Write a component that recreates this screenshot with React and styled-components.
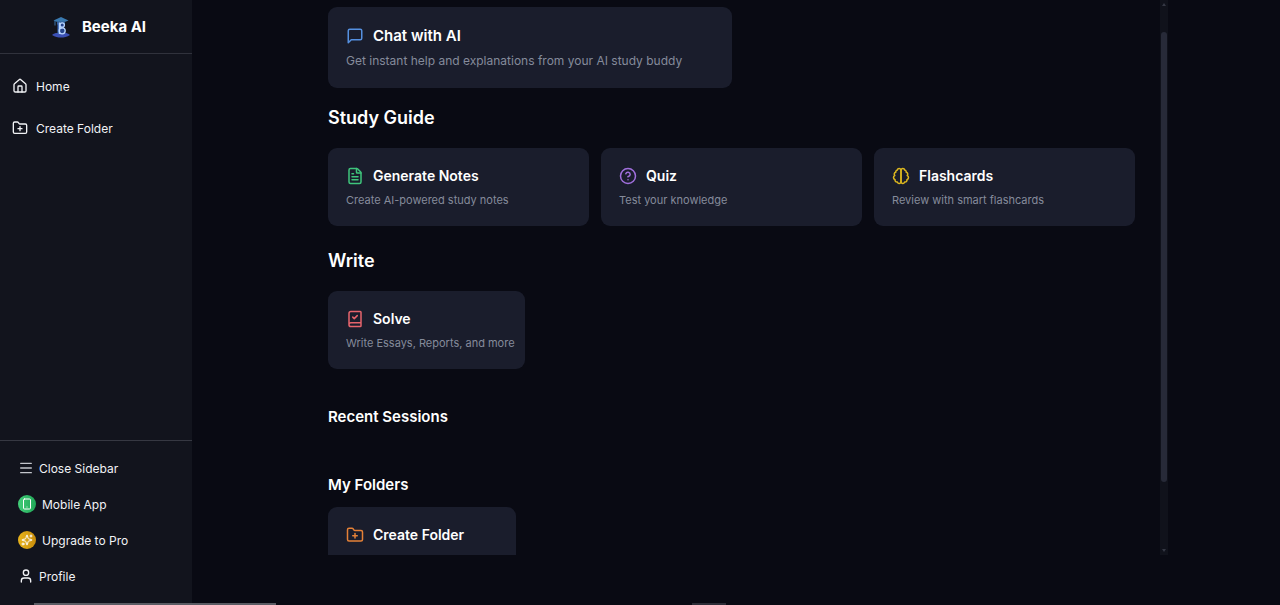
import React from "react";
import styled, { createGlobalStyle, css } from "styled-components";
import {
  House,
  FolderPlus,
  Menu,
  Smartphone,
  Sparkles,
  User,
  FileText,
  CircleHelp,
  BookCheck,
} from "lucide-react";

const GlobalStyle = createGlobalStyle`
  * { box-sizing: border-box; }
  body {
    margin: 0;
    background: #090a13;
    color: #fff;
    font-family: Inter, "Liberation Sans", sans-serif;
  }
  h1, h2, h3, p { margin: 0; }
`;

const Shell = styled.div`
  display: flex;
  height: 100vh;
  overflow: hidden;
`;

const Sidebar = styled.aside`
  display: flex;
  flex-direction: column;
  flex: 0 0 192px;
  background: #12141d;
`;

const Brand = styled.header`
  display: flex;
  align-items: center;
  justify-content: center;
  gap: 12px;
  height: 54px;
  padding-left: 6px;
  border-bottom: 1px solid #30323c;
`;

const BrandName = styled.h1`
  font-size: 15px;
  line-height: 24px;
  font-weight: 700;
`;

const Nav = styled.nav`
  display: flex;
  flex-direction: column;
  flex: 1;
  gap: 10px;
  padding: 16px 12px;
`;

const itemText = css`
  display: flex;
  align-items: center;
  color: #f1f2f5;
  font-family: inherit;
  font-size: 12px;
  text-align: left;
  text-decoration: none;
`;

const NavLink = styled.a`
  ${itemText}
  gap: 8px;
  height: 32px;
`;

const Footer = styled.footer`
  display: flex;
  flex-direction: column;
  padding: 9px 18px 11px;
  border-top: 1px solid #363842;
`;

const FooterButton = styled.button`
  ${itemText}
  gap: 6px;
  height: 36px;
  padding: 0;
  border: 0;
  background: none;
`;

const PlainIcon = styled.span`
  display: flex;
  justify-content: center;
  width: 15px;

  svg { flex: none; }
`;

const RoundIcon = styled.span`
  display: flex;
  align-items: center;
  justify-content: center;
  width: 18px;
  height: 18px;
  border-radius: 50%;
  color: #fff;
  background: ${(p) => p.$fill};
`;

const Main = styled.main`
  display: flex;
  flex: 1;
  justify-content: center;
  min-width: 0;
  padding-bottom: 50px;
`;

const Viewport = styled.div`
  display: flex;
  flex: 1;
  max-width: 864px;
  overflow: hidden;
`;

const Content = styled.div`
  flex: 1;
  min-width: 0;
  padding: 7px 25px 0 24px;
`;

const ScrollTrack = styled.div`
  display: flex;
  flex-direction: column;
  justify-content: space-between;
  align-items: center;
  flex: 0 0 8px;
  padding: 3px 0;
  background: #10121b;
`;

const ScrollThumb = styled.div`
  flex: 0 0 82%;
  width: 6px;
  margin: 26px 0 auto;
  border-radius: 3px;
  background: #272a38;
`;

const Arrow = styled.span`
  border: 2px solid transparent;
  border-width: ${(p) => (p.$up ? "0 2px 3px" : "3px 2px 0")};
  border-${(p) => (p.$up ? "bottom" : "top")}-color: #353844;
`;

const SectionTitle = styled.h2`
  font-size: 18px;
  line-height: 28px;
  font-weight: 600;
  margin: ${(p) => p.$top}px 0 16px;
`;

const SubTitle = styled.h2`
  font-size: 15px;
  line-height: 24px;
  font-weight: 600;
  margin: ${(p) => p.$top}px 0 10px;
`;

const Grid = styled.div`
  display: grid;
  grid-template-columns: repeat(${(p) => p.$columns}, minmax(0, 1fr));
  gap: ${(p) => p.$gap}px;
`;

const Card = styled.button`
  display: flex;
  flex-direction: column;
  gap: ${(p) => (p.$large ? 4 : 6)}px;
  width: ${(p) => p.$width || "auto"};
  min-height: 78px;
  padding: 18px;
  border: 0;
  border-radius: 9px;
  background: #1a1d2c;
  color: #fff;
  font-family: inherit;
  text-align: left;
`;

const CardTitle = styled.span`
  display: flex;
  align-items: center;
  gap: 9px;
  font-size: ${(p) => (p.$large ? 15 : 14)}px;
  line-height: ${(p) => (p.$large ? 22 : 20)}px;
  font-weight: 600;

  svg { color: ${(p) => p.$tint}; }
`;

const CardText = styled.span`
  font-size: ${(p) => (p.$large ? 12 : 11)}px;
  line-height: ${(p) => (p.$large ? 19 : 16)}px;
  color: #858b9b;
  white-space: nowrap;
`;

const BottomLine = styled.div`
  position: fixed;
  bottom: 0;
  left: ${(p) => p.$left}px;
  width: ${(p) => p.$width}px;
  height: 2px;
  background: ${(p) => p.$color};
`;

function Stroke({ size = 18, children }) {
  return (
    <svg
      width={size}
      height={size}
      viewBox="0 0 24 24"
      fill="none"
      stroke="currentColor"
      strokeWidth="2"
      strokeLinecap="round"
      strokeLinejoin="round"
      aria-hidden="true"
    >
      {children}
    </svg>
  );
}

const ChatIcon = () => (
  <Stroke>
    <path d="M21 15a2 2 0 0 1-2 2H7l-4 4V5a2 2 0 0 1 2-2h14a2 2 0 0 1 2 2z" />
  </Stroke>
);

const BrainIcon = () => (
  <Stroke>
    <path d="M9.5 2A2.5 2.5 0 0 1 12 4.5v15a2.5 2.5 0 0 1-4.96.44 2.5 2.5 0 0 1-2.96-3.08 3 3 0 0 1-.34-5.58 2.5 2.5 0 0 1 1.32-4.24 2.5 2.5 0 0 1 1.98-3A2.5 2.5 0 0 1 9.5 2Z" />
    <path d="M14.5 2A2.5 2.5 0 0 0 12 4.5v15a2.5 2.5 0 0 0 4.96.44 2.5 2.5 0 0 0 2.96-3.08 3 3 0 0 0 .34-5.58 2.5 2.5 0 0 0-1.32-4.24 2.5 2.5 0 0 0-1.98-3A2.5 2.5 0 0 0 14.5 2Z" />
  </Stroke>
);

/* Robot figure with a graduation cap standing on an open book. */
const Logo = () => (
  <svg width="18" height="22" viewBox="0 0 18 22" fill="none" aria-hidden="true">
    <path d="M1.500 4.500 9 1l7.500 3.500L9 7.500z" fill="#3a7ab0" />
    <path d="M5 5.500h8v3H5z" fill="#315f98" />
    <path d="M3 5v4.500" stroke="#3a72a8" />
    <path d="M0 19c3-2.500 6-2.500 9-1 3-1.500 6-1.500 9 1-3 2-6 2.500-9 2.500S3 21 0 19z" fill="#3b50b4" />
    <path d="M5.500 7H12v11H5.500z" fill="#3866b8" />
    <circle cx="10.200" cy="9" r="2.200" fill="#25448b" stroke="#b9d6ff" strokeWidth="1.300" />
    <circle cx="10.200" cy="14.800" r="3" fill="#25448b" stroke="#b9d6ff" strokeWidth="1.300" />
    <path d="M7.500 6.500v11.500M7.500 11.800h3" stroke="#b9d6ff" strokeWidth="1.300" />
  </svg>
);

const guides = [
  { title: "Generate Notes", text: "Create AI-powered study notes", tint: "#3fc57c", icon: <FileText size={18} /> },
  { title: "Quiz", text: "Test your knowledge", tint: "#a06fdc", icon: <CircleHelp size={18} /> },
  { title: "Flashcards", text: "Review with smart flashcards", tint: "#dcb71f", icon: <BrainIcon /> },
];

function ActionCard({ title, text, tint, icon, large, width }) {
  return (
    <Card type="button" $large={large} $width={width}>
      <CardTitle $large={large} $tint={tint}>
        {icon}
        {title}
      </CardTitle>
      {text && <CardText $large={large}>{text}</CardText>}
    </Card>
  );
}

export default function App() {
  return (
    <>
      <GlobalStyle />
      <Shell>
        <Sidebar>
          <Brand>
            <Logo />
            <BrandName>Beeka AI</BrandName>
          </Brand>
          <Nav>
            <NavLink href="#home">
              <House size={16} />
              Home
            </NavLink>
            <NavLink href="#create-folder">
              <FolderPlus size={16} />
              Create Folder
            </NavLink>
          </Nav>
          <Footer>
            <FooterButton type="button">
              <PlainIcon><Menu size={16} color="#c3c5cc" /></PlainIcon>
              Close Sidebar
            </FooterButton>
            <FooterButton type="button">
              <RoundIcon $fill="linear-gradient(90deg, #43cf79, #20a657)">
                <Smartphone size={12} />
              </RoundIcon>
              Mobile App
            </FooterButton>
            <FooterButton type="button">
              <RoundIcon $fill="linear-gradient(90deg, #e8b31b, #c88d0c)">
                <Sparkles size={12} />
              </RoundIcon>
              Upgrade to Pro
            </FooterButton>
            <FooterButton type="button">
              <PlainIcon><User size={16} /></PlainIcon>
              Profile
            </FooterButton>
          </Footer>
        </Sidebar>
        <Main>
          <Viewport>
            <Content>
              <ActionCard
                large
                width="50%"
                title="Chat with AI"
                text="Get instant help and explanations from your AI study buddy"
                tint="#5590e0"
                icon={<ChatIcon />}
              />
              <SectionTitle $top={16}>Study Guide</SectionTitle>
              <Grid $columns={3} $gap={12}>
                {guides.map((g) => (
                  <ActionCard key={g.title} {...g} />
                ))}
              </Grid>
              <SectionTitle $top={21}>Write</SectionTitle>
              <ActionCard
                width="197px"
                title="Solve"
                text="Write Essays, Reports, and more"
                tint="#e6646c"
                icon={<BookCheck size={18} />}
              />
              <SubTitle $top={36}>Recent Sessions</SubTitle>
              <SubTitle $top={44}>My Folders</SubTitle>
              <Grid $columns={4} $gap={18}>
                <ActionCard
                  title="Create Folder"
                  tint="#e58137"
                  icon={<FolderPlus size={18} />}
                />
              </Grid>
            </Content>
            <ScrollTrack aria-hidden="true">
              <Arrow $up />
              <ScrollThumb />
              <Arrow />
            </ScrollTrack>
          </Viewport>
        </Main>
      </Shell>
      <BottomLine $left={34} $width={242} $color="#5a5c64" />
      <BottomLine $left={692} $width={34} $color="#2c2d37" />
    </>
  );
}
